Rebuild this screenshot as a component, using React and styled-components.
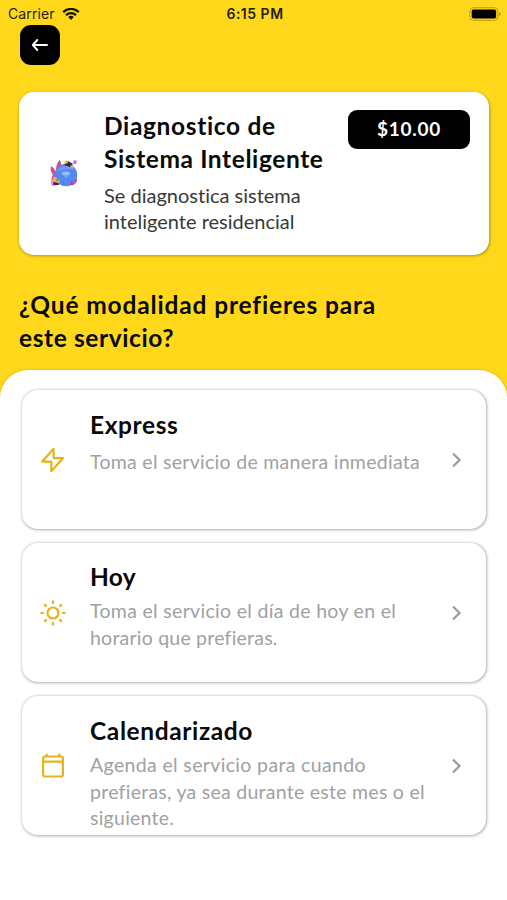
import React from "react";
import styled, { createGlobalStyle } from "styled-components";

const GlobalStyle = createGlobalStyle`
  * {
    box-sizing: border-box;
  }
  body {
    margin: 0;
    background: #fff;
    font-family: Lato, sans-serif;
    font-variant-ligatures: none;
    color: #0a0a0a;
  }
  h1, h2, p {
    margin: 0;
  }
`;

const Screen = styled.div`
  width: 507px;
  height: 900px;
  display: flex;
  flex-direction: column;
  background: #ffd81b;
  overflow: hidden;
`;

const StatusBar = styled.div`
  height: 25px;
  flex: none;
  display: grid;
  grid-template-columns: 1fr auto 1fr;
  align-items: center;
  padding: 3px 5px 0 8px;
  font-family: Inter, sans-serif;
  font-size: 14px;
  line-height: 20px;
  color: #231f05;
`;

const Carrier = styled.div`
  display: flex;
  align-items: center;
  gap: 7px;
  letter-spacing: 0.1px;
`;

const Clock = styled.div`
  font-size: 14px;
  font-weight: 600;
  letter-spacing: 0.5px;
`;

const Battery = styled.div`
  display: flex;
  justify-content: flex-end;
  margin-top: -1px;
`;

const Header = styled.header`
  flex: none;
  height: 345px;
  padding: 0 18px 0 19px;
`;

const BackButton = styled.button`
  display: flex;
  align-items: center;
  justify-content: center;
  width: 40px;
  height: 40px;
  margin-left: 1px;
  padding: 0;
  border: 0;
  border-radius: 11px;
  background: #000;
`;

const ServiceCard = styled.section`
  display: flex;
  height: 163px;
  margin-top: 26.5px;
  border-radius: 15px;
  background: #fff;
  box-shadow: 0.5px 1px 3px rgba(0, 0, 0, 0.3);
`;

const ServiceImage = styled.div`
  flex: none;
  width: 85px;
  display: flex;
  align-items: center;
  padding-left: 31px;
`;

const ServiceInfo = styled.div`
  flex: 1;
  padding-top: 17px;
`;

const Price = styled.div`
  flex: none;
  width: 122px;
  height: 39px;
  margin: 18px 19px 0 0;
  border-radius: 9px;
  background: #000;
  color: #fff;
  font-size: 19px;
  font-weight: 700;
  line-height: 37px;
  letter-spacing: 0.7px;
  text-align: center;
`;

const Title = styled.h2`
  font-size: 24.5px;
  font-weight: 700;
  line-height: 33px;
`;

const Question = styled(Title).attrs({ as: "h1" })`
  margin-top: 33px;
`;

const Description = styled.p`
  margin-top: ${(props) => props.$top || 7}px;
  font-size: ${(props) => (props.$muted ? 19.5 : 20)}px;
  font-weight: 400;
  line-height: 26.7px;
  color: ${(props) => (props.$muted ? "#a1a1a1" : "#383838")};
`;

const Line = styled.span`
  display: block;
  white-space: nowrap;
  letter-spacing: ${(props) => props.$spacing || 0}px;
`;

const Sheet = styled.main`
  flex: 1;
  display: flex;
  flex-direction: column;
  gap: 14px;
  padding: 20px 21px 0 22px;
  border-radius: 28px 28px 0 0;
  background: #fff;
  box-shadow: 0 0 3px rgba(0, 0, 0, 0.2);
`;

const OptionCard = styled.article`
  flex: none;
  display: flex;
  align-items: center;
  height: 139px;
  border-radius: 16px;
  background: #fff;
  box-shadow: 0.5px 0.5px 3px rgba(0, 0, 0, 0.32);
`;

const OptionIcon = styled.div`
  flex: none;
  width: 68px;
  padding-left: 17px;
  display: flex;
  svg {
    display: block;
  }
`;

const OptionText = styled.div`
  flex: 1;
  align-self: flex-start;
  padding-top: ${(props) => props.$top}px;
`;

const Chevron = styled.div`
  flex: none;
  width: 36px;
  display: flex;
`;

const options = [
  {
    id: "express",
    title: "Express",
    spacing: 0.6,
    top: 18,
    gap: 8,
    lines: [["Toma el servicio de manera inmediata", 0.28]],
  },
  {
    id: "hoy",
    title: "Hoy",
    spacing: 0.3,
    top: 17,
    gap: 5,
    lines: [
      ["Toma el servicio el día de hoy en el", 0.31],
      ["horario que prefieras.", 0.22],
    ],
  },
  {
    id: "calendar",
    title: "Calendarizado",
    spacing: 0.62,
    top: 18,
    gap: 5,
    lines: [
      ["Agenda el servicio para cuando", 0.35],
      ["prefieras, ya sea durante este mes o el", 0.26],
      ["siguiente.", 0.25],
    ],
  },
];

const WifiIcon = () => (
  <svg width="18" height="13" viewBox="0 0 18 13" fill="none" stroke="#171400" strokeWidth="2.2">
    <path d="M1.2 4.1a11.2 11.2 0 0 1 15.6 0" />
    <path d="M4 7.1a7.1 7.1 0 0 1 10 0" />
    <path d="M6.2 9.1a4 4 0 0 1 5.6 0L9 12z" fill="#171400" stroke="none" />
  </svg>
);

const BatteryIcon = () => (
  <svg width="33" height="14" viewBox="0 0 33 14">
    <rect x="0.8" y="0.7" width="28" height="12.6" rx="3.6" fill="none" stroke="#b89a16" />
    <rect x="2.7" y="2.5" width="24.4" height="9" rx="1.8" fill="#000" />
    <path d="M30.3 5v4c1.7-.5 1.7-3.5 0-4z" fill="#a38a12" />
  </svg>
);

const ArrowIcon = () => (
  <svg width="18" height="14" viewBox="0 0 18 14" fill="none" stroke="#fff" strokeWidth="1.9" strokeLinecap="round" strokeLinejoin="round">
    <path d="M6.3 2 1.8 7l4.5 5M2.2 7H16" />
  </svg>
);

const WorldIcon = () => (
  <svg width="28" height="30" viewBox="0 0 28 30">
    <path d="M1 27C2 22 1 19 3 17 1 14 0 11 1 8c3 2 4 4 5 6C6 8 7 4 10 2c2 5 1 9-1 13z" fill="#c94f92" />
    <path d="M1 28c1-5 1-8 4-10l4 9z" fill="#e0a2dc" />
    <path d="M20 21c4-2 7-2 7 0 1 4-4 7-8 6z" fill="#d94c9d" />
    <circle cx="16" cy="17" r="11.2" fill="#5189ed" />
    <path d="M7 13c4-6 13-7 18-1-7-2-12 0-18 1z" fill="#7b94f0" />
    <path d="M11 15q5-4 10 0l-5 5z" fill="#78aff5" />
    <path d="M13 16q3-2 6 0" fill="none" stroke="#b9dcfb" />
    <path d="m14 7 4-4 5 3-3 3z" fill="#35265c" />
    <path d="m14 4 3-2 1 3-3 1z" fill="#f1b74d" />
    <path d="m20 8 3-1 1 2-2 1z" fill="#edb466" />
    <path d="m23 6 1-4 3 1-1 3z" fill="#b273e2" />
    <path d="m3 27 1-5 4 1 1 4z" fill="#42254f" />
    <path d="m4 19 3 1-1 3 4-1-1 3-5-1z" fill="#f5b044" />
    <path d="m19 27 3-4 2 4z" fill="#b83e97" />
  </svg>
);

const ZapIcon = () => (
  <svg width="28" height="28" viewBox="0 0 28 28" fill="none" stroke="#e6b31e" strokeWidth="2.2" strokeLinejoin="round">
    <path d="M14.6 2.8 3.3 15.6h9v9.6L24 12.2h-9.4z" />
  </svg>
);

const SunIcon = () => (
  <svg width="28" height="28" viewBox="0 0 28 28" fill="none" stroke="#e6b31e" strokeWidth="2.2">
    <circle cx="14" cy="14" r="5.5" />
    <path d="M14 1.5v3.4M14 23.1v3.4M1.5 14h3.4M23.1 14h3.4M5.2 5.2l2.4 2.4M20.4 20.4l2.4 2.4M5.2 22.8l2.4-2.4M20.4 7.6l2.4-2.4" />
  </svg>
);

const CalendarIcon = () => (
  <svg width="28" height="28" viewBox="0 0 28 28" fill="none" stroke="#e6b31e" strokeWidth="2.2">
    <rect x="4.1" y="4.5" width="19.8" height="20" rx="2" />
    <path d="M4 9.7h20M7.7 1.7v3M20.3 1.7v3" />
  </svg>
);

const ChevronIcon = () => (
  <svg width="14" height="18" viewBox="0 0 14 18" fill="none" stroke="#9b9b9b" strokeWidth="2.2">
    <path d="m3 2.5 6.5 6.5L3 15.5" />
  </svg>
);

const icons = { express: ZapIcon, hoy: SunIcon, calendar: CalendarIcon };

const Option = ({ option }) => {
  const Icon = icons[option.id];

  return (
    <OptionCard>
      <OptionIcon>
        <Icon />
      </OptionIcon>
      <OptionText $top={option.top}>
        <Title>
          <Line $spacing={option.spacing}>{option.title}</Line>
        </Title>
        <Description $muted $top={option.gap}>
          {option.lines.map(([text, spacing]) => (
            <Line key={text} $spacing={spacing}>
              {text}
            </Line>
          ))}
        </Description>
      </OptionText>
      <Chevron>
        <ChevronIcon />
      </Chevron>
    </OptionCard>
  );
};

const App = () => (
  <>
    <GlobalStyle />
    <Screen>
      <StatusBar>
        <Carrier>
          Carrier
          <WifiIcon />
        </Carrier>
        <Clock>6:15 PM</Clock>
        <Battery>
          <BatteryIcon />
        </Battery>
      </StatusBar>
      <Header>
        <BackButton aria-label="Volver">
          <ArrowIcon />
        </BackButton>
        <ServiceCard>
          <ServiceImage>
            <WorldIcon />
          </ServiceImage>
          <ServiceInfo>
            <Title>
              <Line $spacing={0.65}>Diagnostico de</Line>
              <Line $spacing={0.6}>Sistema Inteligente</Line>
            </Title>
            <Description>
              <Line>Se diagnostica sistema</Line>
              <Line>inteligente residencial</Line>
            </Description>
          </ServiceInfo>
          <Price>$10.00</Price>
        </ServiceCard>
        <Question>
          <Line $spacing={0.85}>¿Qué modalidad prefieres para</Line>
          <Line $spacing={0.6}>este servicio?</Line>
        </Question>
      </Header>
      <Sheet>
        {options.map((option) => (
          <Option key={option.id} option={option} />
        ))}
      </Sheet>
    </Screen>
  </>
);

export default App;
